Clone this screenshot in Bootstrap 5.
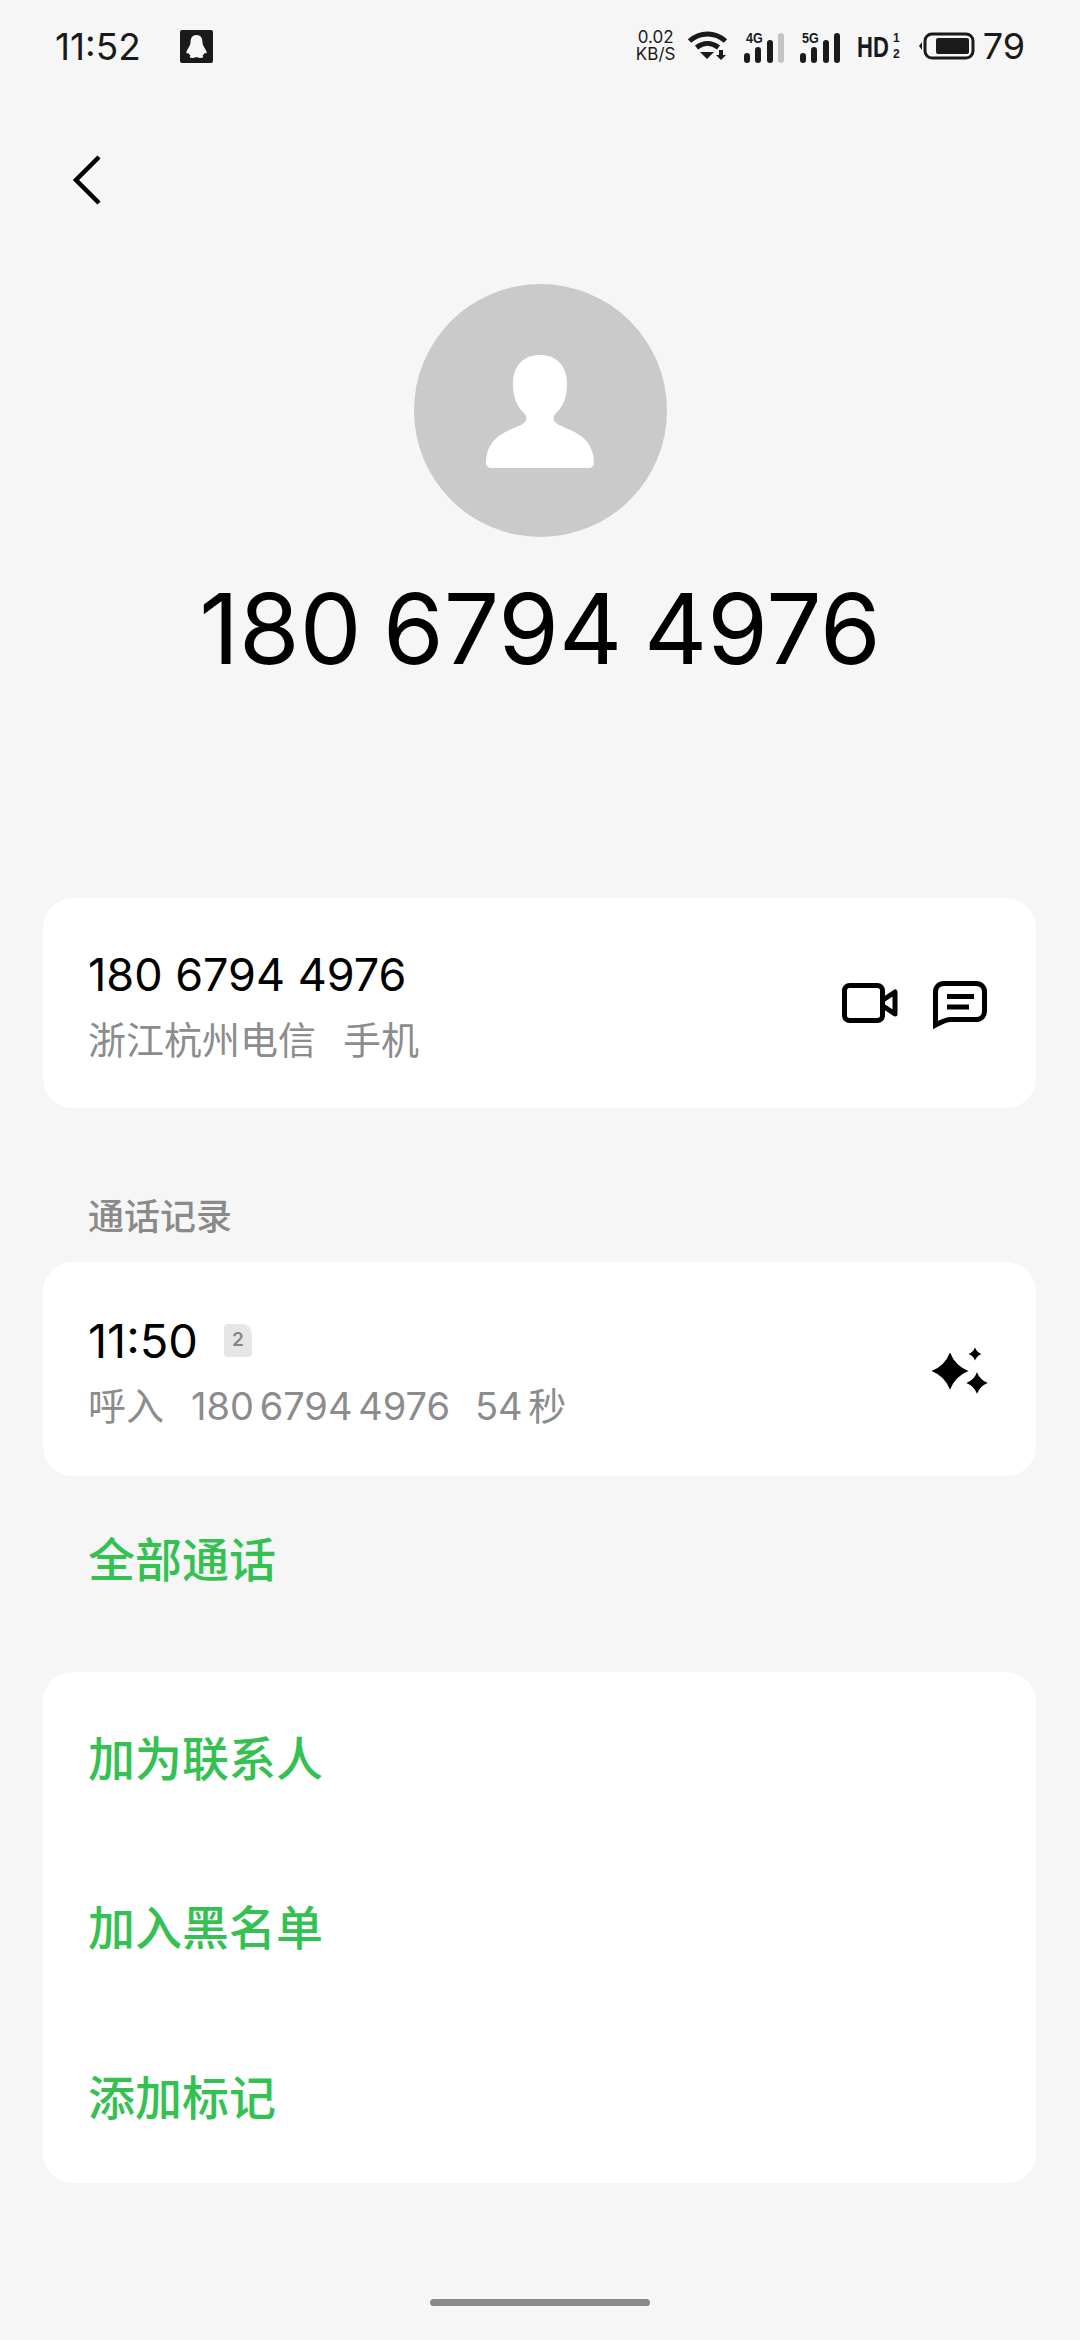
<!DOCTYPE html>
<html lang="zh-CN">
<head>
  <meta charset="UTF-8">
  <meta name="viewport" content="width=device-width, initial-scale=1.0">
  <title>180 6794 4976</title>
  <link href="https://cdn.jsdelivr.net/npm/bootstrap@5.3.0/dist/css/bootstrap.min.css" rel="stylesheet">
  <style>
    body {
      width: 1080px;
      height: 2340px;
      background: #f6f6f6;
      font-family: Inter, "Noto Sans CJK SC", sans-serif;
      color: #000;
      overflow: hidden;
    }
    svg { display: block; flex: none; }
    .status-bar { height: 92px; padding: 0 55px 0 55px; color: #1a1a1a; }
    .status-time { font-size: 37px; line-height: 1; width: 125px; }
    .status-speed { font-size: 17px; line-height: 17px; width: 46px; text-align: center; }
    .status-level { font-size: 36px; line-height: 1; }
    .svg-label { font-family: "Liberation Sans", sans-serif; font-weight: 700; fill: #1a1a1a; }
    .back-row { height: 136px; padding-left: 72px; margin-top: 20px; margin-bottom: -20px; }
    .avatar-disc { width: 253px; height: 253px; background: #cacaca; margin-top: 56px; }
    .main-number { font-size: 98px; line-height: 120px; margin-top: 32px; word-spacing: -6px; }
    .sheet { margin: 0 44px 0 43px; background: #fff; border-radius: 30px; }
    .sheet-first { height: 210px; margin-top: 209px; padding: 0 49px 0 45px; }
    .sheet-call { height: 214px; padding: 0 47px 0 45px; }
    .row-text { padding-top: 4px; }
    .row-title { font-size: 45px; line-height: 54px; }
    .call-time { font-size: 47px; }
    .row-sub { font-size: 38px; line-height: 46px; color: #8c8c8c; margin-top: 15px; word-spacing: -5px; }
    .row-sub span { margin-right: 27px; }
    .row-sub span + span { margin-right: 25px; }
    .section-label { font-size: 36px; font-weight: 500; line-height: 44px; color: #8a8a8a; padding-left: 88px; margin-top: 87px; margin-bottom: 23px; }
    .sim-tag { width: 28px; height: 33px; margin-left: 26px; background: #e6e6e6; border-radius: 4px 10px 4px 4px; font-size: 19px; font-weight: 600; color: #858585; }
    .green-link { display: block; font-size: 47px; font-weight: 500; line-height: 56px; color: #34c152; text-decoration: none; }
    .all-calls { padding-left: 88px; margin-top: 56px; margin-bottom: 84px; }
    .sheet-actions { height: 511px; padding: 2px 45px 0; }
    .icon-pair { gap: 35px; }
    .chat-icon { margin-top: 6px; }
    .spark-icon { margin-top: 3px; }
    .home-bar { width: 220px; height: 7px; background: #8a8a8a; margin: 116px auto 0; }
  </style>
</head>
<body>
  <div class="status-bar d-flex align-items-center">
    <div class="status-time">11:52</div>
    <svg width="33" height="33" viewBox="0 0 33 33"><rect width="33" height="33" rx="2" fill="#1a1a1a"/><path d="M16.500 5C11.500 5 10.500 9 10.500 13C10.500 15 8 18 6.500 21.500C6 23.500 7 24 8.500 23C9 24 9.500 25 10.500 25.500C9 27 10 28.500 13 28C14.500 27.800 15.500 27 16.500 27C17.500 27 18.500 27.800 20 28C23 28.500 24 27 22.500 25.500C23.500 25 24 24 24.500 23C26 24 27 23.500 26.500 21.500C25 18 22.500 15 22.500 13C22.500 9 21.500 5 16.500 5Z" fill="#f6f6f6"/></svg>
    <div class="flex-grow-1"></div>
    <div class="status-speed">0.02<br>KB/S</div>
    <svg class="ms-2" width="41" height="32" viewBox="0 0 41 32"><path d="M2.500 11C13 1.500 28 1.500 38.500 11M9.500 17.500C16.500 12 24.500 12 31.500 17.500" fill="none" stroke="#1a1a1a" stroke-width="5"/><path d="M13 22H27L20 29Z" fill="#1a1a1a"/><path d="M32 20H36V25H39L34 30L29 25H32Z" fill="#1a1a1a"/></svg>
    <svg class="ms-3" width="40" height="36" viewBox="0 -4 40 36"><text class="svg-label" x="1" y="11" font-size="14" transform="translate(1 0) scale(.9 1)">4G</text><rect x="0" y="21" width="6" height="10" rx="3" fill="#1a1a1a"/><rect x="11" y="15" width="6" height="16" rx="3" fill="#1a1a1a"/><rect x="23" y="8" width="6" height="23" rx="3" fill="#1a1a1a"/><rect x="34" y="1" width="6" height="30" rx="3" fill="#c4c4c4"/></svg>
    <svg class="ms-3" width="41" height="36" viewBox="0 -4 41 36"><text class="svg-label" x="1" y="11" font-size="14" transform="translate(1 0) scale(.9 1)">5G</text><rect x="0" y="21" width="6" height="10" rx="3" fill="#1a1a1a"/><rect x="11" y="15" width="6" height="16" rx="3" fill="#1a1a1a"/><rect x="23" y="8" width="6" height="23" rx="3" fill="#1a1a1a"/><rect x="34" y="1" width="6" height="30" rx="3" fill="#1a1a1a"/></svg>
    <svg class="ms-3" width="46" height="32" viewBox="0 0 46 32"><text class="svg-label" x="0" y="27" font-size="29" transform="scale(.76 1)">HD</text><text class="svg-label" x="36" y="12" font-size="12">1</text><text class="svg-label" x="36" y="28" font-size="12">2</text></svg>
    <svg class="ms-3" width="56" height="28" viewBox="0 0 56 28"><path d="M3 10L0 14L3 18Z" fill="#1a1a1a"/><rect x="6" y="2" width="48" height="24" rx="7" fill="none" stroke="#1a1a1a" stroke-width="3"/><rect x="17" y="6" width="33" height="16" rx="2" fill="#1a1a1a"/></svg>
    <div class="status-level ms-2">79</div>
  </div>

  <div class="back-row d-flex align-items-center">
    <svg width="30" height="52" viewBox="0 0 30 52"><path d="M27 3L4 26L27 49" fill="none" stroke="#000" stroke-width="4.500"/></svg>
  </div>

  <div class="avatar-disc rounded-circle mx-auto d-flex align-items-center justify-content-center">
    <svg width="108" height="114" viewBox="0 0 108 114"><path d="M54 1C38 1 27 11 27 30C27 44 31 52 37 58C42 63 42 67 35 71C22 77 1 82 0 108C0 112 2 114 6 114H102C106 114 108 112 108 108C107 82 86 77 73 71C66 67 66 63 71 58C77 52 81 44 81 30C81 11 70 1 54 1Z" fill="#fff"/></svg>
  </div>
  <div class="main-number text-center">180 6794 4976</div>

  <div class="sheet sheet-first d-flex align-items-center justify-content-between">
    <div class="row-text">
      <div class="row-title">180 6794 4976</div>
      <div class="row-sub"><span>浙江杭州电信</span>手机</div>
    </div>
    <div class="icon-pair d-flex align-items-center">
      <svg width="56" height="40" viewBox="0 0 56 40"><rect x="2.500" y="2.500" width="38" height="35" rx="5" fill="none" stroke="#000" stroke-width="5"/><path d="M41 17L53 9V31L41 23" fill="none" stroke="#000" stroke-width="5" stroke-linejoin="round"/></svg>
      <svg class="chat-icon" width="54" height="50" viewBox="0 0 54 50"><path d="M2.500 44V11C2.500 6 6 2.500 11 2.500H43C48 2.500 51.500 6 51.500 11V30C51.500 35 48 38.500 43 38.500H18C13 38.500 8 41 2.500 44Z" fill="none" stroke="#000" stroke-width="5"/><path d="M14 15.500H41M14 26H36" stroke="#000" stroke-width="5"/></svg>
    </div>
  </div>

  <div class="section-label">通话记录</div>
  <div class="sheet sheet-call d-flex align-items-center justify-content-between">
    <div class="row-text">
      <div class="d-flex align-items-center">
        <div class="row-title call-time">11:50</div>
        <div class="sim-tag d-flex align-items-center justify-content-center">2</div>
      </div>
      <div class="row-sub"><span>呼入</span><span>180 6794 4976</span>54 秒</div>
    </div>
    <svg class="spark-icon" width="58" height="48" viewBox="0 0 58 48"><path d="M19 5.500Q24.200 18.800 37.500 24Q24.200 29.200 19 42.500Q13.800 29.200 .500 24Q13.800 18.800 19 5.500Z" fill="#000"/><path d="M44 .500Q45.800 5.200 50.500 7Q45.800 8.800 44 13.500Q42.200 8.800 37.500 7Q42.200 5.200 44 .500Z" fill="#000"/><path d="M46 25.300Q49 33 56.700 36Q49 39 46 46.700Q43 39 35.300 36Q43 33 46 25.300Z" fill="#000"/></svg>
  </div>

  <div class="all-calls"><a class="green-link" href="#">全部通话</a></div>

  <div class="sheet sheet-actions d-flex flex-column justify-content-around">
    <a class="green-link" href="#">加为联系人</a>
    <a class="green-link" href="#">加入黑名单</a>
    <a class="green-link" href="#">添加标记</a>
  </div>

  <div class="home-bar rounded-pill"></div>

  <script src="https://cdn.jsdelivr.net/npm/bootstrap@5.3.0/dist/js/bootstrap.bundle.min.js"></script>
</body>
</html>
